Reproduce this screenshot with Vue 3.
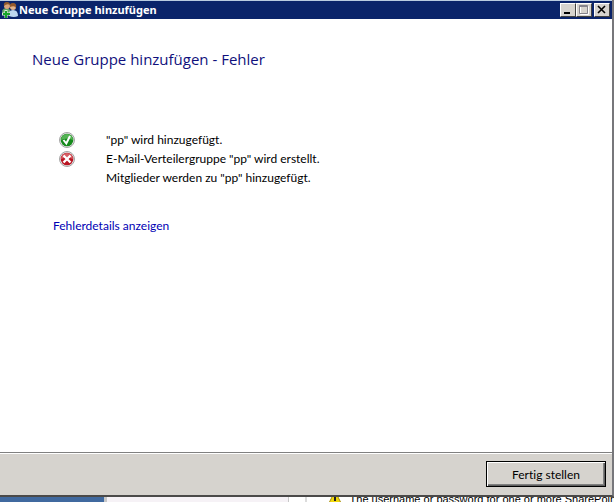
<script setup>
import { ref } from 'vue'

// every step of the wizard, with the state it ended in
const steps = ref([
  { text: '"pp" wird hinzugefügt.', state: 'ok' },
  { text: 'E-Mail-Verteilergruppe "pp" wird erstellt.', state: 'error' },
  { text: 'Mitglieder werden zu "pp" hinzugefügt.', state: '' }
])
</script>

<template>
  <main class="screen">
    <section class="window">
      <header class="titlebar">
        <svg class="titlebar__icon" viewBox="0 0 16 16" aria-hidden="true">
          <path d="M0 9Q1 6 5 6Q9 7 9 12L1 12Z" fill="#62a568" />
          <path d="M7 14Q6 8 11 8Q16 8 16 14Q12 16 7 14Z" fill="#bdd7ef" />
          <circle cx="5" cy="4" r="3" fill="#d9a67c" />
          <path d="M2 4Q1 0 5 0Q8 0 8 3Q5 1 2 4Z" fill="#8c5a2c" />
          <circle cx="11" cy="5" r="3" fill="#e4b48c" />
          <path d="M8 5Q7 1 11 1Q15 1 14 6Q13 3 8 5Z" fill="#95592c" />
          <path d="M4 8V16M0 12H8" stroke="#d8f0d8" stroke-width="3" />
          <path d="M4 9V16M1 12H8" stroke="#16a52b" stroke-width="2" />
        </svg>
        <h1>Neue Gruppe hinzufügen</h1>
        <div class="titlebar__buttons">
          <button aria-label="Minimieren">
            <svg viewBox="0 0 14 12"><path d="M3 9H9" stroke="#000" stroke-width="2" /></svg>
          </button>
          <button aria-label="Maximieren" disabled>
            <svg viewBox="0 0 14 12">
              <path d="M3.500 2.500H11.500V10.500H3.500Z" fill="none" stroke="#fff" />
              <path d="M2.500 1.500H10.500V9.500H2.500ZM2 2.500H11" fill="none" stroke="#85838c" />
            </svg>
          </button>
          <button class="close" aria-label="Schließen">
            <svg viewBox="0 0 14 12"><path d="M3 2L10 9M10 2L3 9" stroke="#000" stroke-width="1.600" /></svg>
          </button>
        </div>
      </header>

      <div class="content">
        <h2>Neue Gruppe hinzufügen - Fehler</h2>
        <ul class="steps">
          <li v-for="step in steps" :key="step.text">
            <span class="steps__icon">
              <svg v-if="step.state" viewBox="0 0 16 16" aria-hidden="true">
                <circle cx="8" cy="8" r="7.500" fill="#e4e4e4" stroke="#a5a5a5" />
                <template v-if="step.state === 'ok'">
                  <circle cx="8" cy="8" r="6.300" fill="#168a1c" />
                  <path d="M2 8A6 6 0 0 1 14 8Q8 5 2 8Z" fill="#54b354" />
                  <path d="M4.500 8L7.300 11.500L11 4" fill="none" stroke="#fff" stroke-width="2" />
                </template>
                <template v-else>
                  <circle cx="8" cy="8" r="6.300" fill="#b91522" />
                  <path d="M2 8A6 6 0 0 1 14 8Q8 5 2 8Z" fill="#d65e64" />
                  <path d="M4.500 4.500L11.500 11.500M11.500 4.500L4.500 11.500" stroke="#fff" stroke-width="2.400" />
                </template>
              </svg>
            </span>
            <span>{{ step.text }}</span>
          </li>
        </ul>
        <a class="details" href="#">Fehlerdetails anzeigen</a>
      </div>

      <footer class="footer">
        <button class="finish">Fertig stellen</button>
      </footer>
    </section>

    <!-- part of the console that shows below the dialog -->
    <div class="behind">
      <div class="behind__nav"></div>
      <div class="behind__list"></div>
      <div class="behind__message">
        <svg viewBox="0 0 16 14" aria-hidden="true">
          <path d="M8 -4Q9 -4 10 -2L16 10H0L6 -2Q7 -4 8 -4Z" fill="#f0d80c" stroke="#a98f10" />
          <path d="M8 -1V4M8 5V7" stroke="#222" stroke-width="2" />
        </svg>
        <span>The username or password for one or more SharePoin</span>
      </div>
    </div>
  </main>
</template>

<style>
body {
  margin: 0;
  overflow: hidden;
}
</style>

<style scoped>
.screen {
  display: flex;
  flex-direction: column;
  height: 100vh;
  overflow: hidden;
  font-family: Lato, "Open Sans", sans-serif;
  font-size: 12px;
  font-variant-ligatures: none;
  color: #000;
}

.window {
  display: flex;
  flex: 1;
  flex-direction: column;
  min-height: 0;
  border-right: 2px solid #77777b;
  border-bottom: 2px solid #4b4a49;
  background: #fff;
}

.titlebar {
  display: flex;
  align-items: center;
  height: 18px;
  padding: 0 2px;
  border-top: 1px solid #b9cbe0;
  background: #0a246a;
  color: #fff;
}

.titlebar__icon {
  width: 16px;
  height: 16px;
}

.titlebar h1 {
  flex: 1;
  margin: 0 0 0 1px;
  font-family: "Noto Sans", sans-serif;
  font-size: 11px;
  line-height: 16px;
}

.titlebar__buttons {
  display: flex;
}

.titlebar__buttons button {
  width: 16px;
  height: 14px;
  padding: 0;
  border: 1px solid;
  border-color: #fff #404040 #404040 #fff;
  background: #d6d3ce;
}

.titlebar__buttons .close {
  margin-left: 2px;
}

.titlebar__buttons svg {
  display: block;
  width: 14px;
  height: 12px;
}

.content {
  flex: 1;
  padding: 28px 32px;
}

.content h2 {
  margin: 0;
  font-family: "Open Sans", "Noto Sans", sans-serif;
  font-size: 15px;
  font-weight: 400;
  line-height: 24px;
  color: #10107c;
}

.steps {
  margin: 59px 0 0 27px;
  padding: 0;
  list-style: none;
}

.steps li {
  display: flex;
  align-items: center;
  height: 19px;
}

.steps__icon {
  width: 47px;
}

.steps__icon svg {
  display: block;
  width: 16px;
  height: 16px;
}

.details {
  display: inline-block;
  margin: 29px 0 0 21px;
  line-height: 20px;
  color: #0000b4;
  text-decoration: none;
}

.footer {
  display: flex;
  justify-content: flex-end;
  padding: 8px 6px;
  border-top: 1px solid #808080;
  background: #d6d3ce;
  box-shadow: inset 0 1px #fff;
}

.finish {
  width: 120px;
  height: 26px;
  padding: 0;
  border: 1px solid #000;
  background: #d6d3ce;
  box-shadow: inset 1px 1px #fff, inset -1px -1px #606060, inset -2px -2px #808080;
  color: #000;
  font: inherit;
}

.behind {
  display: grid;
  grid-template-columns: 17% 30% 1fr;
  height: 5px;
  overflow: hidden;
  background: #fff;
}

.behind__nav {
  background: #40699f;
}

.behind__list {
  border: solid #c8c8c8;
  border-width: 0 1px 0 3px;
  background: #f6f2f6;
}

.behind__message {
  display: flex;
  gap: 7px;
  align-items: flex-start;
  margin-left: 16px;
  padding-left: 20px;
  border-left: 2px solid #dcdcdc;
  font-family: "Liberation Sans", sans-serif;
  font-size: 11px;
  white-space: nowrap;
}

.behind__message svg {
  flex: none;
  width: 16px;
  height: 14px;
}

.behind__message span {
  line-height: 4px;
}
</style>
